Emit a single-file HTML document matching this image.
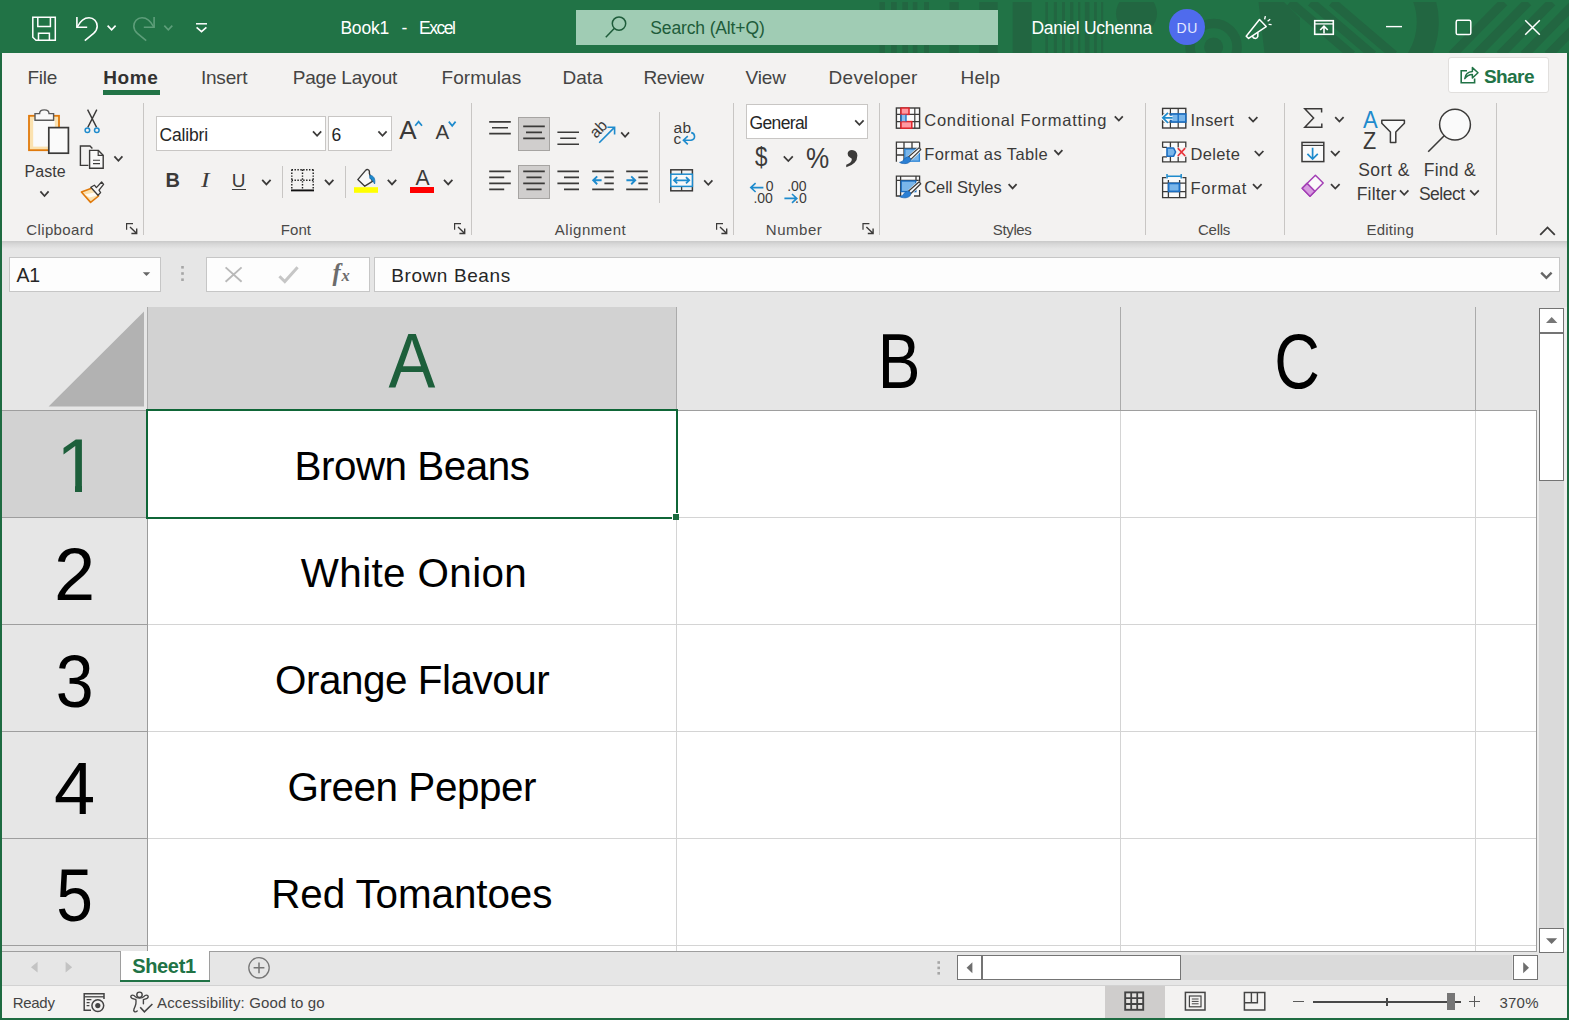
<!DOCTYPE html>
<html lang="en">
<head>
<meta charset="utf-8">
<title>Book1 - Excel</title>
<style>
*{box-sizing:border-box;margin:0;padding:0}
html,body{width:1569px;height:1020px;overflow:hidden;background:#217346;font-family:"Liberation Sans",sans-serif;color:#3b3a39}
#app{position:absolute;left:0;top:0;width:1569px;height:1020px;background:#217346;overflow:hidden}
.a{position:absolute}
.t{position:absolute;white-space:pre;line-height:1}
svg{position:absolute;overflow:visible}
</style>
</head>
<body>
<div id="app">
<!-- title bar -->
<div class="a" style="left:0px;top:0px;width:1569px;height:53px;background:#217346;"></div>
<svg style="left:860px;top:0px;overflow:hidden" width="709" height="53" viewBox="860 0 709 53"><rect x="860" y="0" width="709" height="2" fill="#217346"/><g><rect x="879.5" y="2" width="5.5" height="51" fill="#226641"/><rect x="891" y="2" width="5.7" height="51" fill="#226641"/><rect x="902.4" y="2" width="5.6" height="51" fill="#226641"/><rect x="912.8" y="2" width="4.6" height="51" fill="#226641"/><rect x="924" y="2" width="5.0" height="51" fill="#226641"/><rect x="949.5" y="2" width="9.2" height="51" fill="#226641"/><rect x="979.3" y="2" width="18.3" height="51" fill="#226641"/><rect x="1012.6" y="2" width="19.0" height="51" fill="#226641"/><rect x="1045.4" y="2" width="2.6" height="51" fill="#226641"/><rect x="1053.9" y="2" width="3.0" height="51" fill="#226641"/><rect x="1062" y="2" width="3.0" height="51" fill="#226641"/><rect x="1070" y="2" width="3.4" height="51" fill="#226641"/><rect x="1078" y="2" width="2.3" height="51" fill="#226641"/><rect x="1084.9" y="2" width="4.6" height="51" fill="#226641"/><rect x="1094" y="2" width="2.8" height="51" fill="#226641"/><rect x="1101" y="2" width="2.2" height="51" fill="#226641"/><circle cx="1136.5" cy="13.5" r="20.5" fill="#226641"/><circle cx="1213.6" cy="47" r="23.5" fill="none" stroke="#226641" stroke-width="9.5"/><circle cx="1213.6" cy="47" r="9.5" fill="#226641"/><path d="M1258.5 2H1284L1300 18V53H1264.5Z" fill="#226641"/><line x1="1290" y1="2" x2="1352" y2="55" stroke="#226641" stroke-width="9"/><line x1="1311" y1="2" x2="1373" y2="55" stroke="#226641" stroke-width="9"/><line x1="1332" y1="2" x2="1394" y2="55" stroke="#226641" stroke-width="9"/><path d="M1395 -37A69.5 69.5 0 0 1 1395 81" fill="none" stroke="#226641" stroke-width="22"/><line x1="1452" y1="55" x2="1504" y2="2" stroke="#226641" stroke-width="9"/><line x1="1476" y1="55" x2="1528" y2="2" stroke="#226641" stroke-width="9"/><line x1="1500" y1="55" x2="1552" y2="2" stroke="#226641" stroke-width="9"/><line x1="1524" y1="55" x2="1576" y2="2" stroke="#226641" stroke-width="9"/><line x1="1548" y1="55" x2="1600" y2="2" stroke="#226641" stroke-width="9"/></g><rect x="860" y="0" width="709" height="2" fill="#217346"/></svg>
<svg style="left:30px;top:14px" width="30" height="30" viewBox="30 14 30 30" ><path d="M32.8 17.3H55.3V40.3H36L32.8 37.2Z M37.8 17.3V26.5H50.4V17.3 M38.5 40.3V33.2H49.4V40.3" fill="none" stroke="#fff" stroke-width="1.5" stroke-linejoin="miter"/></svg>
<svg style="left:74px;top:14px" width="46" height="30" viewBox="74 14 46 30" ><path d="M76.9 17V27.2H87.2" fill="none" stroke="#fff" stroke-width="1.6"/><path d="M77.2 27C80 21.5 84.2 17.7 89 17.7C93.8 17.7 97.2 21.6 97.2 26.2C97.2 29.3 95.8 31.4 93.6 33.4L84.8 40.6" fill="none" stroke="#fff" stroke-width="1.6"/><polyline points="107.6,25.6 111.6,29.8 115.6,25.6" fill="none" stroke="#fff" stroke-width="1.6"/></svg>
<svg style="left:130px;top:14px" width="46" height="30" viewBox="130 14 46 30" ><path d="M154.1 17V27.2H143.8" fill="none" stroke="#5e9e7a" stroke-width="1.6"/><path d="M153.8 27C151 21.5 146.8 17.7 142 17.7C137.2 17.7 133.8 21.6 133.8 26.2C133.8 29.3 135.2 31.4 137.4 33.4L146.2 40.6" fill="none" stroke="#5e9e7a" stroke-width="1.6"/><polyline points="164.3,25.6 168.3,29.8 172.3,25.6" fill="none" stroke="#5e9e7a" stroke-width="1.6"/></svg>
<svg style="left:194px;top:20px" width="16" height="14" viewBox="194 20 16 14" ><line x1="196" y1="23.8" x2="207" y2="23.8" stroke="#fff" stroke-width="1.5"/><polyline points="196.6,27.4 201.5,31.6 206.4,27.4" fill="none" stroke="#fff" stroke-width="1.6"/></svg>
<div class="t" style="left:340.40px;top:20.00px;font-size:17.5px;letter-spacing:-0.204px;color:#fff;">Book1</div>
<div class="t" style="left:401.40px;top:20.00px;font-size:17.5px;color:#fff;">-</div>
<div class="t" style="left:419.00px;top:20.00px;font-size:17.5px;letter-spacing:-1.479px;color:#fff;">Excel</div>
<div class="a" style="left:576px;top:10px;width:422px;height:35px;background:#a0ccb4;"></div>
<svg style="left:604px;top:15px" width="24" height="24" viewBox="604 15 24 24" ><circle cx="619" cy="23.6" r="6.7" fill="none" stroke="#1e5c3a" stroke-width="1.5"/><line x1="614.2" y1="28.6" x2="605.8" y2="37.2" stroke="#1e5c3a" stroke-width="1.5"/></svg>
<div class="t" style="left:650.30px;top:20.00px;font-size:17.5px;letter-spacing:-0.137px;color:#1e5c3a;">Search (Alt+Q)</div>
<div class="t" style="left:1031.50px;top:20.00px;font-size:17.5px;letter-spacing:-0.288px;color:#fff;">Daniel Uchenna</div>
<div class="a" style="left:1169px;top:9px;width:36px;height:36px;border-radius:50%;background:#4f6bed"></div>
<div class="t" style="left:1176.60px;top:21.00px;font-size:14px;letter-spacing:0.439px;color:#e4e8ff;">DU</div>
<svg style="left:1243px;top:14px" width="30" height="28" viewBox="1243 14 30 28" ><path d="M1246.2 36.2L1259.5 19.5L1266.2 26.6L1248.6 38.4Z" fill="none" stroke="#fff" stroke-width="1.5" stroke-linejoin="round"/><path d="M1252.6 35.8C1252.6 38.6 1256.6 39.6 1257.8 36.4L1257.9 32.6" fill="none" stroke="#fff" stroke-width="1.5"/><path d="M1264.6 19.4L1265.4 16.2M1267.6 21.2L1270.2 19.2M1268.6 24.4L1271.6 24.6" stroke="#fff" stroke-width="1.4" fill="none"/></svg>
<svg style="left:1312px;top:18px" width="24" height="19" viewBox="1312 18 24 19" ><rect x="1314.7" y="20.7" width="18.6" height="13.6" fill="none" stroke="#fff" stroke-width="1.6"/><line x1="1314.7" y1="23.9" x2="1333.3" y2="23.9" stroke="#fff" stroke-width="1.3"/><path d="M1324 33.6V26.6M1320.2 30L1324 26.2L1327.8 30" fill="none" stroke="#fff" stroke-width="1.6"/></svg>
<svg style="left:1384px;top:18px" width="20" height="18" viewBox="1384 18 20 18" ><line x1="1386" y1="26.6" x2="1402" y2="26.6" stroke="#fff" stroke-width="1.4"/></svg>
<svg style="left:1454px;top:18px" width="20" height="19" viewBox="1454 18 20 19" ><rect x="1456.2" y="20.3" width="14.6" height="14.2" rx="1.6" fill="none" stroke="#fff" stroke-width="1.5"/></svg>
<svg style="left:1523px;top:18px" width="20" height="19" viewBox="1523 18 20 19" ><path d="M1525.2 20.2L1539.8 34.8M1539.8 20.2L1525.2 34.8" stroke="#fff" stroke-width="1.5" fill="none"/></svg>
<div class="a" style="left:2px;top:53px;width:1565px;height:188px;background:#f3f2f1;"></div>
<!-- tabs -->
<div class="t" style="left:27.50px;top:68.00px;font-size:19px;letter-spacing:-0.304px;color:#444443;">File</div>
<div class="t" style="left:103.20px;top:68.00px;font-size:19px;letter-spacing:0.653px;font-weight:bold;color:#323130;">Home</div>
<div class="a" style="left:103px;top:90px;width:57px;height:5px;background:#217346;"></div>
<div class="t" style="left:200.90px;top:68.00px;font-size:19px;letter-spacing:-0.187px;color:#444443;">Insert</div>
<div class="t" style="left:292.70px;top:68.00px;font-size:19px;letter-spacing:-0.200px;color:#444443;">Page Layout</div>
<div class="t" style="left:441.60px;top:68.00px;font-size:19px;letter-spacing:0.052px;color:#444443;">Formulas</div>
<div class="t" style="left:562.50px;top:68.00px;font-size:19px;letter-spacing:0.041px;color:#444443;">Data</div>
<div class="t" style="left:643.50px;top:68.00px;font-size:19px;letter-spacing:-0.350px;color:#444443;">Review</div>
<div class="t" style="left:745.50px;top:68.00px;font-size:19px;letter-spacing:-0.135px;color:#444443;">View</div>
<div class="t" style="left:828.60px;top:68.00px;font-size:19px;letter-spacing:0.277px;color:#444443;">Developer</div>
<div class="t" style="left:960.50px;top:68.00px;font-size:19px;letter-spacing:0.156px;color:#444443;">Help</div>
<div class="a" style="left:1448px;top:57px;width:101px;height:36px;background:#fff;border:1px solid #e1dfdd;border-radius:3px"></div>
<svg style="left:1457px;top:64px" width="23" height="22" viewBox="1457 64 23 22" ><path d="M1467 70.8H1461.2V82.8H1474.6V78.4" fill="none" stroke="#217346" stroke-width="1.6"/><path d="M1464.8 78.6C1465.4 74 1468.4 71.6 1472.4 71.4V67.6L1478 72.8L1472.4 78V74.4C1469.2 74.4 1466.8 75.6 1464.8 78.6Z" fill="none" stroke="#217346" stroke-width="1.5" stroke-linejoin="round"/></svg>
<div class="t" style="left:1484.00px;top:67.00px;font-size:19px;letter-spacing:-0.582px;font-weight:bold;color:#217346;">Share</div>
<!-- ribbon -->
<div class="a" style="left:143px;top:103px;width:1px;height:132px;background:#c8c6c4;"></div>
<div class="a" style="left:471px;top:103px;width:1px;height:132px;background:#c8c6c4;"></div>
<div class="a" style="left:733px;top:103px;width:1px;height:132px;background:#c8c6c4;"></div>
<div class="a" style="left:879px;top:103px;width:1px;height:132px;background:#c8c6c4;"></div>
<div class="a" style="left:1145px;top:103px;width:1px;height:132px;background:#c8c6c4;"></div>
<div class="a" style="left:1284px;top:103px;width:1px;height:132px;background:#c8c6c4;"></div>
<div class="a" style="left:1496px;top:103px;width:1px;height:132px;background:#c8c6c4;"></div>
<svg style="left:26px;top:107px" width="46" height="49" viewBox="26 107 46 49" ><rect x="29" y="115.8" width="30" height="34.4" fill="#fbe2b0" stroke="#e07a0c" stroke-width="1.8"/><rect x="33.2" y="119.6" width="21.6" height="27" fill="#fafafa"/><path d="M35 120.2V113.6H39.6C39.6 108.6 49 108.6 49 113.6H53.6V120.2Z" fill="#f8f8f8" stroke="#5a5a5a" stroke-width="1.4"/><rect x="48.8" y="127.6" width="19.6" height="25.6" fill="#fafafa" stroke="#3b3a39" stroke-width="1.7"/></svg>
<div class="t" style="left:24.60px;top:164.00px;font-size:16px;letter-spacing:0.017px;color:#3b3a39;">Paste</div>
<svg style="left:38px;top:189px" width="14" height="10" viewBox="38 189 14 10" ><polyline points="40.4,191.4 44.5,196 48.6,191.4" fill="none" stroke="#3b3a39" stroke-width="1.75"/></svg>
<svg style="left:82px;top:107px" width="20" height="29" viewBox="82 107 20 29" ><path d="M87.6 109.6L96.6 127.4M96.8 109.6L87.8 127.4" stroke="#3b3a39" stroke-width="1.4" fill="none"/><circle cx="87.4" cy="130.2" r="2.3" fill="none" stroke="#1e8bcd" stroke-width="1.5"/><circle cx="96.8" cy="130.2" r="2.3" fill="none" stroke="#1e8bcd" stroke-width="1.5"/></svg>
<svg style="left:78px;top:143px" width="48" height="28" viewBox="78 143 48 28" ><path d="M88.4 165.4H80.4V146H90L92.4 148.4" fill="none" stroke="#3b3a39" stroke-width="1.4"/><path d="M89.6 150.4H98.4L103.2 155.2V168.2H89.6Z" fill="#f8f8f8" stroke="#3b3a39" stroke-width="1.4"/><path d="M98.2 150.6V155.4H103" fill="none" stroke="#3b3a39" stroke-width="1.2"/><path d="M93 160.2H100M93 163.6H100" stroke="#3b3a39" stroke-width="1.1"/><polyline points="114.4,156.4 118.4,160.8 122.4,156.4" fill="none" stroke="#3b3a39" stroke-width="1.75"/></svg>
<svg style="left:78px;top:179px" width="28" height="26" viewBox="78 179 28 26" ><path d="M81.4 192L93.6 187.4L98.6 196L90.6 202.4Z" fill="#fbe2b0" stroke="#e07a0c" stroke-width="1.6" stroke-linejoin="round"/><path d="M84.5 194.6L95.8 192.2L97 195.6L89.5 197.6Z" fill="#fff" opacity=".85"/><path d="M90.8 187.2L94.4 185.2L96.4 187.6L101.6 182L103.6 184.4L99 190.2L100.6 192.6L98 195.2Z" fill="#f8f8f8" stroke="#3b3a39" stroke-width="1.3" stroke-linejoin="round"/></svg>
<div class="t" style="left:26.30px;top:222.00px;font-size:15px;letter-spacing:0.366px;color:#4a4948;">Clipboard</div>
<svg style="left:125px;top:222px" width="15" height="15" viewBox="125 222 15 15" ><path d="M126.6 229.8V223.6H133.0" fill="none" stroke="#3b3a39" stroke-width="1.2"/><path d="M130.0 227.0L136.5 233.3M136.7 228.4V233.5H131.4" fill="none" stroke="#3b3a39" stroke-width="1.4"/></svg>
<div class="a" style="left:156px;top:116px;width:170px;height:35px;background:#fff;border:1px solid #c8c6c4;"></div>
<div class="a" style="left:328px;top:116px;width:64px;height:35px;background:#fff;border:1px solid #c8c6c4;"></div>
<div class="t" style="left:159.60px;top:127.00px;font-size:17.5px;letter-spacing:-0.185px;color:#262626;">Calibri</div>
<div class="t" style="left:331.40px;top:127.00px;font-size:17.5px;color:#262626;">6</div>
<svg style="left:310px;top:128px" width="14" height="12" viewBox="310 128 14 12" ><polyline points="313,131.4 317.1,135.8 321.2,131.4" fill="none" stroke="#3b3a39" stroke-width="1.75"/></svg>
<svg style="left:374px;top:128px" width="16" height="12" viewBox="374 128 16 12" ><polyline points="378.4,131.4 382.5,135.8 386.6,131.4" fill="none" stroke="#3b3a39" stroke-width="1.75"/></svg>
<div class="t" style="left:399.20px;top:117.00px;font-size:26px;color:#3b3a39;">A</div>
<svg style="left:413px;top:119px" width="11" height="9" viewBox="413 119 11 9" ><polyline points="415.2,125.8 418.6,121.6 422,125.8" fill="none" stroke="#1e8bcd" stroke-width="1.7"/></svg>
<div class="t" style="left:435.60px;top:122.00px;font-size:20.5px;color:#3b3a39;">A</div>
<svg style="left:447px;top:119px" width="11" height="9" viewBox="447 119 11 9" ><polyline points="448.8,121.6 452.20000000000005,125.8 455.6,121.6" fill="none" stroke="#1e8bcd" stroke-width="1.7"/></svg>
<div class="t" style="left:165.60px;top:170.00px;font-size:20px;font-weight:bold;color:#3b3a39;">B</div>
<div class="t" style="left:201.40px;top:170.00px;font-size:20.5px;font-style:italic;font-family:'Liberation Serif',serif;color:#3b3a39;transform:scaleX(1.25);transform-origin:left;">I</div>
<div class="t" style="left:231.80px;top:171.00px;font-size:19px;color:#3b3a39;">U</div>
<div class="a" style="left:232px;top:189px;width:14px;height:1.4000000000000057px;background:#3b3a39;"></div>
<svg style="left:260px;top:177px" width="13" height="10" viewBox="260 177 13 10" ><polyline points="262.2,179.8 266.4,184.4 270.6,179.8" fill="none" stroke="#3b3a39" stroke-width="1.75"/></svg>
<div class="a" style="left:282px;top:166px;width:1px;height:32px;background:#c8c6c4;"></div>
<svg style="left:290px;top:167px" width="26" height="26" viewBox="290 167 26 26" ><g stroke="#1c1c1c" stroke-width="1.4" stroke-dasharray="1.4 1.5" fill="none"><path d="M291.6 169.8H313.6M291.8 169.6V189M313.2 169.6V189M291.6 180.2H313.6M302.5 169.6V189"/></g><line x1="291" y1="190.4" x2="314" y2="190.4" stroke="#111" stroke-width="1.9"/></svg>
<svg style="left:323px;top:177px" width="13" height="10" viewBox="323 177 13 10" ><polyline points="325,179.8 329.2,184.4 333.4,179.8" fill="none" stroke="#3b3a39" stroke-width="1.75"/></svg>
<div class="a" style="left:345px;top:166px;width:1px;height:32px;background:#c8c6c4;"></div>
<svg style="left:352px;top:167px" width="28" height="27" viewBox="352 167 28 27" ><path d="M357.8 179.6L365.6 170.4C366.8 168.8 369.4 169.4 369.4 171.6V173.6L372.4 181.4L364.8 186.2Z" fill="#f8f8f8" stroke="#3b3a39" stroke-width="1.4" stroke-linejoin="round"/><path d="M369.8 175.2C373.6 175.6 375.6 178.6 374.6 184C373.2 181 372 179.2 369.8 178.4Z" fill="#1e8bcd" stroke="#1c6fae" stroke-width=".8"/><rect x="354" y="187.2" width="24" height="5.6" fill="#ffff00"/></svg>
<svg style="left:386px;top:177px" width="13" height="10" viewBox="386 177 13 10" ><polyline points="387.8,179.8 392.0,184.4 396.2,179.8" fill="none" stroke="#3b3a39" stroke-width="1.75"/></svg>
<div class="t" style="left:414.90px;top:167.00px;font-size:22.5px;color:#3b3a39;transform:scaleX(.94);">A</div>
<div class="a" style="left:410px;top:187.2px;width:24px;height:5.600000000000023px;background:#ff0000;"></div>
<svg style="left:442px;top:177px" width="13" height="10" viewBox="442 177 13 10" ><polyline points="444,179.8 448.2,184.4 452.4,179.8" fill="none" stroke="#3b3a39" stroke-width="1.75"/></svg>
<div class="t" style="left:280.80px;top:222.00px;font-size:15px;letter-spacing:0.046px;color:#4a4948;">Font</div>
<svg style="left:453px;top:222px" width="15" height="15" viewBox="453 222 15 15" ><path d="M454.6 229.8V223.6H461.0" fill="none" stroke="#3b3a39" stroke-width="1.2"/><path d="M458.0 227.0L464.5 233.3M464.7 228.4V233.5H459.4" fill="none" stroke="#3b3a39" stroke-width="1.4"/></svg>
<div class="a" style="left:518px;top:117px;width:32px;height:34px;background:#d0cecd;border:1px solid #a6a4a2;"></div>
<div class="a" style="left:518px;top:165px;width:32px;height:34px;background:#d0cecd;border:1px solid #a6a4a2;"></div>
<svg style="left:488px;top:118px" width="92" height="29" viewBox="488 118 92 29" ><path d="M489.2 121.8H510.8M492.0 127.7H508.0M489.2 133.6H510.8" stroke="#3b3a39" stroke-width="1.65" fill="none"/><path d="M523.2 126.4H544.8000000000001M526.0 132.4H542.0M523.2 138.4H544.8000000000001" stroke="#3b3a39" stroke-width="1.65" fill="none"/><path d="M557.4 132.2H579.0M560.1999999999999 138.2H576.1999999999999M557.4 144.2H579.0" stroke="#3b3a39" stroke-width="1.65" fill="none"/></svg>
<svg style="left:488px;top:168px" width="162" height="24" viewBox="488 168 162 24" ><path d="M489.2 171.4H510.8M489.2 177.4H504.2M489.2 183.3H510.8M489.2 189.3H504.2" stroke="#3b3a39" stroke-width="1.65" fill="none"/><path d="M523.2 171.4H544.8000000000001M526.4000000000001 177.4H541.6M523.2 183.3H544.8000000000001M526.4000000000001 189.3H541.6" stroke="#3b3a39" stroke-width="1.65" fill="none"/><path d="M557.4 171.4H579.0M564.0 177.4H579.0M557.4 183.3H579.0M564.0 189.3H579.0" stroke="#3b3a39" stroke-width="1.65" fill="none"/><path d="M592.2 171.4H613.8000000000001M604.4000000000001 177.4H613.8000000000001M604.4000000000001 183.3H613.8000000000001M592.2 189.3H613.8000000000001" stroke="#3b3a39" stroke-width="1.65" fill="none"/><path d="M601.6 180.3H593.6M597.2 176.4L593.2 180.3L597.2 184.2" fill="none" stroke="#1e8bcd" stroke-width="1.9"/><path d="M626.2 171.4H647.8000000000001M638.4000000000001 177.4H647.8000000000001M638.4000000000001 183.3H647.8000000000001M626.2 189.3H647.8000000000001" stroke="#3b3a39" stroke-width="1.65" fill="none"/><path d="M626.4 180.3H634.8M631.2 176.4L635.2 180.3L631.2 184.2" fill="none" stroke="#1e8bcd" stroke-width="1.9"/></svg>
<div class="t" style="left:598px;top:125px;font-size:16px;color:#3b3a39;transform:rotate(-45deg);transform-origin:0 100%;letter-spacing:-.3px">ab</div>
<svg style="left:596px;top:124px" width="36" height="22" viewBox="596 124 36 22" ><path d="M599.2 142.8L614.2 127.6M607.4 127.2H614.6V134.4" fill="none" stroke="#1e8bcd" stroke-width="1.6"/><polyline points="621.2,132.4 625.1,136.8 629,132.4" fill="none" stroke="#3b3a39" stroke-width="1.75"/></svg>
<div class="a" style="left:659px;top:112px;width:1px;height:91px;background:#c8c6c4;"></div>
<div class="t" style="left:673.40px;top:120.00px;font-size:15.5px;letter-spacing:0.379px;color:#3b3a39;">ab</div>
<div class="t" style="left:673.40px;top:131.00px;font-size:15.5px;color:#3b3a39;">c</div>
<svg style="left:682px;top:132px" width="14" height="14" viewBox="682 132 14 14" ><path d="M691.2 132.6C695.6 133.4 695.8 139.6 691 140.2H683.6M687.8 136.2L683.4 140.2L687.8 144.4" fill="none" stroke="#1e8bcd" stroke-width="1.6"/></svg>
<svg style="left:669px;top:168px" width="45" height="25" viewBox="669 168 45 25" ><rect x="670.8" y="169.8" width="21.6" height="21" fill="none" stroke="#3b3a39" stroke-width="1.5"/><path d="M681.6 169.8V174M681.6 186.6V190.8" stroke="#3b3a39" stroke-width="1.3"/><rect x="670.8" y="174.2" width="21.6" height="12.2" fill="#f8f8f8" stroke="#1e8bcd" stroke-width="1.5"/><path d="M674.4 180.3H688.8M677.2 177.2L674 180.3L677.2 183.4M686 177.2L689.2 180.3L686 183.4" fill="none" stroke="#1e8bcd" stroke-width="1.8"/><polyline points="704.2,180.4 708.3,184.8 712.4,180.4" fill="none" stroke="#3b3a39" stroke-width="1.75"/></svg>
<div class="t" style="left:554.80px;top:222.00px;font-size:15px;letter-spacing:0.522px;color:#4a4948;">Alignment</div>
<svg style="left:715px;top:222px" width="15" height="15" viewBox="715 222 15 15" ><path d="M716.6 229.8V223.6H723.0" fill="none" stroke="#3b3a39" stroke-width="1.2"/><path d="M720.0 227.0L726.5 233.3M726.7 228.4V233.5H721.4" fill="none" stroke="#3b3a39" stroke-width="1.4"/></svg>
<div class="a" style="left:746px;top:104px;width:122px;height:35px;background:#fff;border:1px solid #c8c6c4;"></div>
<div class="t" style="left:749.40px;top:115.00px;font-size:17.5px;letter-spacing:-0.609px;color:#262626;">General</div>
<svg style="left:853px;top:118px" width="13" height="10" viewBox="853 118 13 10" ><polyline points="855.2,120.4 859.4000000000001,124.8 863.6,120.4" fill="none" stroke="#3b3a39" stroke-width="1.75"/></svg>
<div class="t" style="left:754.60px;top:143.00px;font-size:28px;color:#3b3a39;transform:scaleX(.8);transform-origin:left;">$</div>
<svg style="left:782px;top:154px" width="13" height="10" viewBox="782 154 13 10" ><polyline points="783.8,156.4 788.3,161 792.8,156.4" fill="none" stroke="#3b3a39" stroke-width="1.75"/></svg>
<div class="t" style="left:805.60px;top:144.00px;font-size:29px;color:#3b3a39;transform:scaleX(.9);transform-origin:left;">%</div>
<div class="t" style="left:845.60px;top:111.00px;font-size:56px;font-weight:bold;font-family:'Liberation Serif',serif;color:#3b3a39;">,</div>
<div class="t" style="left:765.80px;top:179.00px;font-size:14px;color:#3b3a39;">0</div>
<div class="t" style="left:753.40px;top:191.00px;font-size:14px;color:#3b3a39;">.00</div>
<svg style="left:749px;top:181px" width="17" height="13" viewBox="749 181 17 13" ><path d="M763.4 187.6H751M755.6 183.2L750.8 187.6L755.6 192" fill="none" stroke="#1e8bcd" stroke-width="1.6"/></svg>
<div class="t" style="left:787.20px;top:179.00px;font-size:14px;color:#3b3a39;">.00</div>
<div class="t" style="left:795.00px;top:191.00px;font-size:14px;color:#3b3a39;">.0</div>
<svg style="left:783px;top:192px" width="17" height="13" viewBox="783 192 17 13" ><path d="M784.4 198.4H796.6M792 194L796.8 198.4L792 202.8" fill="none" stroke="#1e8bcd" stroke-width="1.6"/></svg>
<div class="t" style="left:765.80px;top:222.00px;font-size:15px;letter-spacing:0.541px;color:#4a4948;">Number</div>
<svg style="left:861px;top:222px" width="15" height="15" viewBox="861 222 15 15" ><path d="M863.0 229.8V223.6H869.4" fill="none" stroke="#3b3a39" stroke-width="1.2"/><path d="M866.4 227.0L872.9 233.3M873.1 228.4V233.5H867.8" fill="none" stroke="#3b3a39" stroke-width="1.4"/></svg>
<svg style="left:895px;top:106px" width="27" height="24" viewBox="895 106 27 24" ><rect x="896.4" y="108" width="23.2" height="20.2" fill="#fafafa" stroke="#3b3a39" stroke-width="1.4"/><path d="M900.8 108V128.2M914.8 108V128.2M896.4 114.4H919.6M896.4 121.6H919.6" stroke="#3b3a39" stroke-width="1.2" fill="none"/><rect x="901" y="108" width="8" height="6.4" fill="#ff9aa2" stroke="#e0262c" stroke-width="1.5"/><rect x="901" y="121.6" width="10.8" height="6.6" fill="#ff9aa2" stroke="#e0262c" stroke-width="1.5"/><rect x="901.2" y="114.8" width="4.8" height="6.4" fill="#8cc0ee"/><path d="M901.2 114.6V121.4M906 114.6V121.4" stroke="#1b6ec2" stroke-width="1.3"/></svg>
<div class="t" style="left:924.20px;top:112.00px;font-size:16.5px;letter-spacing:0.773px;color:#3b3a39;">Conditional Formatting</div>
<svg style="left:1113px;top:114px" width="12" height="9" viewBox="1113 114 12 9" ><polyline points="1114.8,116.4 1118.8,120.6 1122.8,116.4" fill="none" stroke="#3b3a39" stroke-width="1.75"/></svg>
<svg style="left:895px;top:140px" width="27" height="26" viewBox="895 140 27 26" ><rect x="896.4" y="142.2" width="23.2" height="19.4" fill="#fafafa"/><path d="M896.4 142.2H919.6M896.4 141.5V161.8M904 142.2V161.6M912 142.2V148.4M919.6 142.2V148.4M896.4 148.4H919.6M896.4 155H904" stroke="#3b3a39" stroke-width="1.3" fill="none"/><rect x="904.8" y="149.2" width="14.6" height="12" fill="#7ab6ea" stroke="#2f86d6" stroke-width="1.3"/><path d="M920.4 148.4L908.8 159.0" stroke="#f3f2f1" stroke-width="5.4" fill="none"/><path d="M919.2 147.6L908.4 157.0L910.6 159.6L920.8 149.6Z" fill="#fafafa" stroke="#3b3a39" stroke-width="1.2" stroke-linejoin="round"/><path d="M899.6 162.4C903.8 162.2 903.6 157.6 907.6 156.8C910.8 157.0 911.6 159.8 909.8 161.8C907.2 164.2 902.8 164.0 899.6 162.4Z" fill="#2a7fd4" stroke="#1b66b4" stroke-width=".8"/></svg>
<div class="t" style="left:924.20px;top:146.00px;font-size:16.5px;letter-spacing:0.400px;color:#3b3a39;">Format as Table</div>
<svg style="left:1053px;top:148px" width="12" height="9" viewBox="1053 148 12 9" ><polyline points="1054.4,150.2 1058.4,154.4 1062.4,150.2" fill="none" stroke="#3b3a39" stroke-width="1.75"/></svg>
<svg style="left:895px;top:174px" width="27" height="26" viewBox="895 174 27 26" ><rect x="896.4" y="176.2" width="23.2" height="19.8" fill="#fafafa"/><path d="M896.4 176.2H919.6V183M896.4 175.5V196H901M914 196H919.6V190M896.4 180.4H919.6M900.6 176.2V196M916 176.2V180.4" stroke="#3b3a39" stroke-width="1.3" fill="none"/><rect x="901.2" y="181" width="14.6" height="10.6" fill="#7ab6ea" stroke="#1b6ec2" stroke-width="1.4"/><path d="M920.4 182.6L908.8 193.2" stroke="#f3f2f1" stroke-width="5.4" fill="none"/><path d="M919.2 181.8L908.4 191.2L910.6 193.8L920.8 183.8Z" fill="#fafafa" stroke="#3b3a39" stroke-width="1.2" stroke-linejoin="round"/><path d="M899.6 196.6C903.8 196.4 903.6 191.8 907.6 191.0C910.8 191.2 911.6 194.0 909.8 196.0C907.2 198.4 902.8 198.2 899.6 196.6Z" fill="#2a7fd4" stroke="#1b66b4" stroke-width=".8"/></svg>
<div class="t" style="left:924.20px;top:179.00px;font-size:16.5px;letter-spacing:-0.049px;color:#3b3a39;">Cell Styles</div>
<svg style="left:1007px;top:182px" width="12" height="9" viewBox="1007 182 12 9" ><polyline points="1008.6,184.2 1012.6,188.4 1016.6,184.2" fill="none" stroke="#3b3a39" stroke-width="1.75"/></svg>
<div class="t" style="left:992.80px;top:222.00px;font-size:15px;letter-spacing:-0.358px;color:#4a4948;">Styles</div>
<svg style="left:1160px;top:106px" width="28" height="24" viewBox="1160 106 28 24" ><rect x="1162.6" y="108.4" width="23.2" height="19.6" fill="#fafafa" stroke="#3b3a39" stroke-width="1.4"/><path d="M1170.4 108.4V128M1178.2 108.4V128M1162.6 114H1185.8M1162.6 122H1185.8" stroke="#3b3a39" stroke-width="1.2" fill="none"/><rect x="1171" y="114" width="14.8" height="8" fill="#7ab6ea" stroke="#1b6ec2" stroke-width="1.6"/><line x1="1178.2" y1="114" x2="1178.2" y2="122" stroke="#1b6ec2" stroke-width="1.4"/><path d="M1172.6 117.8H1163.4M1168 112.8L1162.8 117.8L1168 122.8" fill="none" stroke="#fafafa" stroke-width="4"/><path d="M1172.6 117.8H1163.4M1168 112.8L1162.8 117.8L1168 122.8" fill="none" stroke="#1e8bcd" stroke-width="1.7"/></svg>
<div class="t" style="left:1190.60px;top:112.00px;font-size:16.5px;letter-spacing:0.389px;color:#3b3a39;">Insert</div>
<svg style="left:1247px;top:115px" width="13" height="9" viewBox="1247 115 13 9" ><polyline points="1248.8,117.2 1253.1,121.6 1257.4,117.2" fill="none" stroke="#3b3a39" stroke-width="1.75"/></svg>
<svg style="left:1160px;top:140px" width="28" height="24" viewBox="1160 140 28 24" ><rect x="1162.6" y="142.2" width="23.2" height="19.6" fill="#fafafa"/><path d="M1162.6 147.4V142.2H1185.8V147.4M1162.6 156.8V161.8H1185.8V156.8M1170.4 142.2V147.4M1178.2 142.2V147.4M1170.4 156.8V161.8M1178.2 156.8V161.8M1162.6 147.4H1167M1162.6 156.8H1167" stroke="#3b3a39" stroke-width="1.3" fill="none"/><circle cx="1181.4" cy="152" r="5.2" fill="#f3f2f1"/><path d="M1167 148H1173.6L1175.6 152L1173.6 156.2H1167Z" fill="#7ab6ea" stroke="#1b6ec2" stroke-width="1.6" stroke-linejoin="round"/><path d="M1177.8 148.2L1185.2 156M1185.2 148.2L1177.8 156" stroke="#e8333a" stroke-width="1.7" fill="none"/></svg>
<div class="t" style="left:1190.60px;top:146.00px;font-size:16.5px;letter-spacing:0.317px;color:#3b3a39;">Delete</div>
<svg style="left:1253px;top:149px" width="13" height="9" viewBox="1253 149 13 9" ><polyline points="1254.8,151 1259.1,155.4 1263.4,151" fill="none" stroke="#3b3a39" stroke-width="1.75"/></svg>
<svg style="left:1160px;top:172px" width="28" height="27" viewBox="1160 172 28 27" ><rect x="1162.6" y="177.6" width="23.2" height="20" fill="#fafafa"/><path d="M1166 177.6H1162.6V197.6H1185.8V177.6H1182.4M1168.4 180V197.6M1179.6 180V197.6M1162.6 183.2H1185.8M1162.6 191.6H1185.8" stroke="#3b3a39" stroke-width="1.3" fill="none"/><rect x="1168.6" y="183.4" width="10.8" height="8" fill="#7ab6ea" stroke="#1b6ec2" stroke-width="1.7"/><path d="M1167 176.2H1181.2M1167 174V178.6M1181.2 174V178.6" stroke="#1e8bcd" stroke-width="1.5" fill="none"/></svg>
<div class="t" style="left:1190.60px;top:180.00px;font-size:16.5px;letter-spacing:0.690px;color:#3b3a39;">Format</div>
<svg style="left:1251px;top:182px" width="13" height="9" viewBox="1251 182 13 9" ><polyline points="1253,184.2 1257.3,188.6 1261.6,184.2" fill="none" stroke="#3b3a39" stroke-width="1.75"/></svg>
<div class="t" style="left:1198.00px;top:222.00px;font-size:15px;letter-spacing:-0.268px;color:#4a4948;">Cells</div>
<svg style="left:1302px;top:106px" width="44" height="24" viewBox="1302 106 44 24" ><path d="M1321.6 112.4V108.8H1304.8L1313.6 118L1304.8 127.2H1321.8V123.4" fill="none" stroke="#3b3a39" stroke-width="1.5"/><polyline points="1335.2,117.2 1339.4,121.6 1343.6,117.2" fill="none" stroke="#3b3a39" stroke-width="1.75"/></svg>
<svg style="left:1300px;top:140px" width="42" height="24" viewBox="1300 140 42 24" ><rect x="1302" y="142.4" width="21.8" height="19.2" fill="#fafafa" stroke="#3b3a39" stroke-width="1.5"/><line x1="1302" y1="145.4" x2="1323.8" y2="145.4" stroke="#3b3a39" stroke-width="1.2"/><path d="M1312.6 147.8V158.6M1307.4 153.8L1312.6 159L1317.8 153.8" fill="none" stroke="#1e8bcd" stroke-width="1.7"/><polyline points="1331,151 1335.3,155.4 1339.6,151" fill="none" stroke="#3b3a39" stroke-width="1.75"/></svg>
<svg style="left:1300px;top:173px" width="42" height="26" viewBox="1300 173 42 26" ><path d="M1302.2 188.2L1315.4 175.2L1323.2 183L1310 196.2Z" fill="#fafafa" stroke="#a33fb5" stroke-width="1.5" stroke-linejoin="round"/><path d="M1302.2 188.2L1307.1 183.4L1314.9 191.3L1310 196.2Z" fill="#d79ae0" stroke="#a33fb5" stroke-width="1.5" stroke-linejoin="round"/><polyline points="1331,184.2 1335.3,188.6 1339.6,184.2" fill="none" stroke="#3b3a39" stroke-width="1.75"/></svg>
<div class="t" style="left:1362.60px;top:108.00px;font-size:24px;color:#1e8bcd;transform:scaleX(.92);transform-origin:left;">A</div>
<div class="t" style="left:1363.40px;top:129.00px;font-size:24px;color:#3b3a39;transform:scaleX(.9);transform-origin:left;">Z</div>
<svg style="left:1380px;top:118px" width="26" height="27" viewBox="1380 118 26 27" ><path d="M1381.8 120.2H1404.4V123.2L1395.8 132V142.4H1390.4V132L1381.8 123.2Z" fill="#fafafa" stroke="#3b3a39" stroke-width="1.5" stroke-linejoin="round"/></svg>
<div class="t" style="left:1358.20px;top:162.00px;font-size:17.5px;letter-spacing:0.512px;color:#3b3a39;">Sort &amp;</div>
<div class="t" style="left:1356.80px;top:186.00px;font-size:17.5px;letter-spacing:0.135px;color:#3b3a39;">Filter</div>
<svg style="left:1398px;top:188px" width="13" height="9" viewBox="1398 188 13 9" ><polyline points="1400,190.4 1404.2,194.8 1408.4,190.4" fill="none" stroke="#3b3a39" stroke-width="1.75"/></svg>
<svg style="left:1426px;top:107px" width="47" height="47" viewBox="1426 107 47 47" ><circle cx="1455" cy="124.6" r="15.4" fill="#fafafa" stroke="#3b3a39" stroke-width="1.5"/><line x1="1444.2" y1="135.8" x2="1428.2" y2="151.8" stroke="#3b3a39" stroke-width="1.6"/></svg>
<div class="t" style="left:1423.80px;top:162.00px;font-size:17.5px;letter-spacing:0.237px;color:#3b3a39;">Find &amp;</div>
<div class="t" style="left:1418.90px;top:186.00px;font-size:17.5px;letter-spacing:-0.490px;color:#3b3a39;">Select</div>
<svg style="left:1468px;top:188px" width="13" height="9" viewBox="1468 188 13 9" ><polyline points="1470.2,190.4 1474.5,194.8 1478.8,190.4" fill="none" stroke="#3b3a39" stroke-width="1.75"/></svg>
<div class="t" style="left:1366.40px;top:222.00px;font-size:15px;letter-spacing:0.248px;color:#4a4948;">Editing</div>
<svg style="left:1538px;top:225px" width="19" height="12" viewBox="1538 225 19 12" ><polyline points="1540.2,234.8 1547.5,227.4 1554.8,234.8" fill="none" stroke="#3b3a39" stroke-width="1.75"/></svg>
<div class="a" style="left:2px;top:241px;width:1565px;height:8px;background:linear-gradient(#c9c9c9,#d8d8d8 40%,#e6e6e6)"></div>
<!-- formula bar -->
<div class="a" style="left:2px;top:249px;width:1565px;height:58px;background:#e6e6e6;"></div>
<div class="a" style="left:9px;top:257px;width:152px;height:35px;background:#fdfdfd;border:1px solid #c6c6c6;"></div>
<div class="t" style="left:16.40px;top:266.00px;font-size:19.5px;letter-spacing:-0.226px;color:#262626;">A1</div>
<svg style="left:141px;top:270px" width="11" height="8" viewBox="141 270 11 8" ><path d="M142.8 272.2H150.2L146.5 275.9Z" fill="#666"/></svg>
<svg style="left:180px;top:265px" width="6" height="18" viewBox="180 265 6 18" ><g fill="#a6a6a6"><rect x="181.2" y="266" width="2.6" height="2.6"/><rect x="181.2" y="272.2" width="2.6" height="2.6"/><rect x="181.2" y="278.4" width="2.6" height="2.6"/></g></svg>
<div class="a" style="left:206px;top:257px;width:164px;height:35px;background:#fdfdfd;border:1px solid #c6c6c6;"></div>
<svg style="left:223px;top:265px" width="21" height="19" viewBox="223 265 21 19" ><path d="M225.6 267.4L241.6 281.8M241.6 267.4L225.6 281.8" stroke="#b9b9b9" stroke-width="1.9" fill="none"/></svg>
<svg style="left:277px;top:264px" width="23" height="20" viewBox="277 264 23 20" ><path d="M279.4 276.2L284.8 281.6L297.6 267.2" stroke="#c6c6c6" stroke-width="3" fill="none"/></svg>
<div class="t" style="left:332.60px;top:261.00px;font-size:24.5px;font-weight:bold;font-style:italic;font-family:'Liberation Serif',serif;color:#6c6c6c;">f</div>
<div class="t" style="left:341.40px;top:268.00px;font-size:16.5px;font-weight:bold;font-style:italic;font-family:'Liberation Serif',serif;color:#6c6c6c;">x</div>
<div class="a" style="left:374px;top:257px;width:1186px;height:35px;background:#fdfdfd;border:1px solid #c6c6c6;"></div>
<div class="t" style="left:391.20px;top:266.00px;font-size:19px;letter-spacing:0.599px;color:#262626;">Brown Beans</div>
<svg style="left:1539px;top:270px" width="15" height="11" viewBox="1539 270 15 11" ><path d="M1541.2 272.6L1546.4 277.8L1551.6 272.6" fill="none" stroke="#666" stroke-width="2.4"/></svg>
<!-- grid -->
<div class="a" style="left:2px;top:307px;width:1535px;height:644px;background:#fff;"></div>
<div class="a" style="left:2px;top:307px;width:1535px;height:103px;background:#e6e6e6;"></div>
<div class="a" style="left:2px;top:410px;width:145px;height:541px;background:#e6e6e6;"></div>
<div class="a" style="left:148px;top:307px;width:528px;height:102px;background:#d2d2d2;"></div>
<div class="a" style="left:2px;top:411px;width:144px;height:106px;background:#d2d2d2;"></div>
<svg style="left:46px;top:309px" width="101" height="100" viewBox="46 309 101 100" ><path d="M144 311.6V406.6H48.6Z" fill="#b2b2b2"/></svg>
<div class="a" style="left:147px;top:307px;width:1px;height:103px;background:#ababab;"></div>
<div class="a" style="left:676px;top:307px;width:1px;height:103px;background:#ababab;"></div>
<div class="a" style="left:1120px;top:307px;width:1px;height:103px;background:#ababab;"></div>
<div class="a" style="left:1475px;top:307px;width:1px;height:103px;background:#ababab;"></div>
<div class="a" style="left:2px;top:410px;width:1535px;height:1px;background:#9e9e9e;"></div>
<div class="a" style="left:147px;top:410px;width:1px;height:541px;background:#9b9b9b;"></div>
<div class="a" style="left:2px;top:517px;width:145px;height:1px;background:#9e9e9e;"></div>
<div class="a" style="left:148px;top:517px;width:1389px;height:1px;background:#d4d4d4;"></div>
<div class="a" style="left:2px;top:624px;width:145px;height:1px;background:#9e9e9e;"></div>
<div class="a" style="left:148px;top:624px;width:1389px;height:1px;background:#d4d4d4;"></div>
<div class="a" style="left:2px;top:731px;width:145px;height:1px;background:#9e9e9e;"></div>
<div class="a" style="left:148px;top:731px;width:1389px;height:1px;background:#d4d4d4;"></div>
<div class="a" style="left:2px;top:838px;width:145px;height:1px;background:#9e9e9e;"></div>
<div class="a" style="left:148px;top:838px;width:1389px;height:1px;background:#d4d4d4;"></div>
<div class="a" style="left:2px;top:945px;width:145px;height:1px;background:#9e9e9e;"></div>
<div class="a" style="left:148px;top:945px;width:1389px;height:1px;background:#d4d4d4;"></div>
<div class="a" style="left:676px;top:411px;width:1px;height:540px;background:#d4d4d4;"></div>
<div class="a" style="left:1120px;top:411px;width:1px;height:540px;background:#d4d4d4;"></div>
<div class="a" style="left:1475px;top:411px;width:1px;height:540px;background:#d4d4d4;"></div>
<div class="t" style="left:385.99px;top:322.00px;font-size:78px;color:#1d5f3b;transform:scaleX(.9);">A</div>
<div class="t" style="left:872.99px;top:322.00px;font-size:78px;color:#000;transform:scaleX(.82);">B</div>
<div class="t" style="left:1269.43px;top:322.00px;font-size:78px;color:#000;transform:scaleX(.81);">C</div>
<div class="t" style="left:56.20px;top:429.00px;font-size:75.5px;color:#1d5f3b;">1</div>
<div class="t" style="left:54.02px;top:538.00px;font-size:74px;color:#000;">2</div>
<div class="t" style="left:54.02px;top:645.00px;font-size:74px;color:#000;transform:scaleX(.92);">3</div>
<div class="t" style="left:54.02px;top:752.00px;font-size:74px;color:#000;">4</div>
<div class="t" style="left:54.02px;top:859.00px;font-size:74px;color:#000;transform:scaleX(.89);">5</div>
<div class="a" style="left:56px;top:484px;width:18.599999999999994px;height:11px;background:#d2d2d2;"></div>
<div class="a" style="left:82px;top:484px;width:16px;height:11px;background:#d2d2d2;"></div>
<div class="t" style="left:294.60px;top:446.00px;font-size:40.4px;letter-spacing:-0.500px;color:#000;">Brown Beans</div>
<div class="t" style="left:300.80px;top:553.00px;font-size:40.4px;letter-spacing:0.373px;color:#000;">White Onion</div>
<div class="t" style="left:275.00px;top:660.00px;font-size:40.4px;letter-spacing:-0.450px;color:#000;">Orange Flavour</div>
<div class="t" style="left:287.40px;top:767.00px;font-size:40.4px;letter-spacing:-0.416px;color:#000;">Green Pepper</div>
<div class="t" style="left:271.20px;top:874.00px;font-size:40.4px;letter-spacing:-0.080px;color:#000;">Red Tomantoes</div>
<div class="a" style="left:146px;top:409px;width:532px;height:110px;border:2px solid #0f6637"></div>
<div class="a" style="left:672px;top:513px;width:8px;height:8px;background:#fff;"></div>
<div class="a" style="left:678px;top:517px;width:2px;height:1px;background:#d4d4d4;"></div>
<div class="a" style="left:676px;top:519px;width:1px;height:2px;background:#d4d4d4;"></div>
<div class="a" style="left:673px;top:514px;width:6px;height:6px;background:#1a6b3e;"></div>
<div class="a" style="left:1536px;top:410px;width:1px;height:541px;background:#9b9b9b;"></div>
<div class="a" style="left:1537px;top:307px;width:30px;height:644px;background:#e6e6e6;"></div>
<div class="a" style="left:1537px;top:410px;width:2px;height:541px;background:#ededed;"></div>
<div class="a" style="left:1564px;top:307px;width:3px;height:644px;background:#ededed;"></div>
<div class="a" style="left:1539px;top:333px;width:25px;height:595px;background:#dadada;"></div>
<div class="a" style="left:1539px;top:308px;width:25px;height:25px;background:#fff;border:1px solid #747474;"></div>
<svg style="left:1545px;top:316px" width="14" height="10" viewBox="1545 316 14 10" ><path d="M1546 323H1557.4L1551.7 317Z" fill="#777"/></svg>
<div class="a" style="left:1539px;top:333px;width:25px;height:148px;background:#fff;border:1px solid #747474;"></div>
<!-- sheet tabs -->
<div class="a" style="left:2px;top:951px;width:1565px;height:35px;background:#e6e6e6;"></div>
<div class="a" style="left:2px;top:951px;width:1535px;height:1px;background:#9e9e9e;"></div>
<div class="a" style="left:2px;top:985px;width:1565px;height:1px;background:#d2d2d2;"></div>
<div class="a" style="left:1539px;top:928px;width:25px;height:25px;background:#fff;border:1px solid #747474;"></div>
<svg style="left:1545px;top:935px" width="14" height="10" viewBox="1545 935 14 10" ><path d="M1546 938.2H1557.2L1551.6 944Z" fill="#6e6e6e"/></svg>
<svg style="left:28px;top:960px" width="48" height="15" viewBox="28 960 48 15" ><path d="M37.6 961.8V972.6L31 967.2Z M65.6 961.8V972.6L72.2 967.2Z" fill="#c3c3c3"/></svg>
<div class="a" style="left:121px;top:951px;width:88px;height:31px;background:#fff;"></div>
<div class="a" style="left:120px;top:951px;width:1px;height:31px;background:#9e9e9e;"></div>
<div class="a" style="left:209px;top:951px;width:1px;height:31px;background:#9e9e9e;"></div>
<div class="a" style="left:120px;top:980px;width:90px;height:2px;background:#217346;"></div>
<div class="t" style="left:132.20px;top:956.00px;font-size:20px;letter-spacing:-0.332px;font-weight:bold;color:#217346;">Sheet1</div>
<svg style="left:247px;top:956px" width="24" height="24" viewBox="247 956 24 24" ><circle cx="259" cy="967.8" r="10.2" fill="none" stroke="#767676" stroke-width="1.3"/><path d="M253.6 967.8H264.4M259 962.4V973.2" stroke="#767676" stroke-width="1.5"/></svg>
<svg style="left:936px;top:960px" width="6" height="16" viewBox="936 960 6 16" ><g fill="#a6a6a6"><rect x="937.4" y="961.2" width="2.6" height="2.6"/><rect x="937.4" y="966.6" width="2.6" height="2.6"/><rect x="937.4" y="972" width="2.6" height="2.6"/></g></svg>
<div class="a" style="left:957px;top:955px;width:555px;height:25px;background:#dadada;"></div>
<div class="a" style="left:957px;top:955px;width:25px;height:25px;background:#fff;border:1px solid #747474;"></div>
<svg style="left:963px;top:961px" width="12" height="14" viewBox="963 961 12 14" ><path d="M972.4 962.2V973.2L966.6 967.7Z" fill="#6e6e6e"/></svg>
<div class="a" style="left:982px;top:955px;width:199px;height:25px;background:#fff;border:1px solid #747474;"></div>
<div class="a" style="left:1513px;top:955px;width:25px;height:25px;background:#fff;border:1px solid #747474;"></div>
<svg style="left:1519px;top:961px" width="12" height="14" viewBox="1519 961 12 14" ><path d="M1523.2 962.2V973.2L1529 967.7Z" fill="#6e6e6e"/></svg>
<!-- status bar -->
<div class="a" style="left:2px;top:986px;width:1565px;height:32px;background:#f3f2f1;"></div>
<div class="t" style="left:12.70px;top:995.00px;font-size:15px;letter-spacing:-0.292px;color:#444;">Ready</div>
<svg style="left:82px;top:992px" width="25" height="22" viewBox="82 992 25 22" ><path d="M91 1010.2H84.2V993.8H104V999" fill="none" stroke="#444" stroke-width="1.5"/><line x1="84.2" y1="996.8" x2="104" y2="996.8" stroke="#444" stroke-width="1.3"/><path d="M86.6 999.6H91.4M86.6 1002.6H89.6M86.6 1005.6H89.4" stroke="#444" stroke-width="1.3"/><circle cx="97.8" cy="1005.6" r="5.9" fill="#f3f2f1" stroke="#444" stroke-width="1.5"/><circle cx="97.8" cy="1005.6" r="2.6" fill="#444"/></svg>
<svg style="left:129px;top:991px" width="25" height="23" viewBox="129 991 25 23" ><circle cx="139.5" cy="994.8" r="2.7" fill="none" stroke="#444" stroke-width="1.4"/><path d="M135.8 999.4C133.4 998.8 130.6 998.6 130.8 996.6C131 994.8 133.6 994.6 135.2 996.6C136.8 998.6 142.2 998.6 143.8 996.6C145.4 994.6 148 994.8 148.2 996.6C148.4 998.6 145.6 998.8 143.4 999.6V1003.8M135.8 999.4C136.8 1003.2 135.4 1006.2 134 1009C133 1011.4 135.2 1012.8 137.2 1011" fill="none" stroke="#444" stroke-width="1.4" stroke-linecap="round" stroke-linejoin="round"/><path d="M140.2 1007.2L144.4 1011.8L152.4 1004" fill="none" stroke="#444" stroke-width="1.6"/></svg>
<div class="t" style="left:157.00px;top:995.00px;font-size:15px;letter-spacing:0.142px;color:#444;">Accessibility: Good to go</div>
<div class="a" style="left:1105px;top:986px;width:60px;height:32px;background:#cfcdcc;"></div>
<svg style="left:1123px;top:990px" width="23" height="22" viewBox="1123 990 23 22" ><rect x="1125.2" y="992.4" width="18" height="17.4" fill="#e4e2e0" stroke="#444" stroke-width="1.9"/><path d="M1131.2 992.4V1009.8M1137.2 992.4V1009.8M1125.2 998.2H1143.2M1125.2 1004H1143.2" stroke="#444" stroke-width="1.8"/></svg>
<svg style="left:1183px;top:990px" width="25" height="22" viewBox="1183 990 25 22" ><rect x="1185.4" y="992.4" width="19.6" height="17.6" fill="none" stroke="#444" stroke-width="1.5"/><rect x="1189.4" y="996" width="11.6" height="10.8" fill="none" stroke="#444" stroke-width="1.2"/><path d="M1191.8 999H1198.6M1191.8 1001.4H1198.6M1191.8 1003.8H1198.6" stroke="#444" stroke-width="1"/></svg>
<svg style="left:1242px;top:990px" width="26" height="22" viewBox="1242 990 26 22" ><path d="M1244.4 992.4H1264.8V1010H1244.4Z" fill="none" stroke="#444" stroke-width="1.5"/><path d="M1244.4 1002.8H1257.4V992.4M1251.4 992.4V1002.8" fill="none" stroke="#444" stroke-width="1.4"/></svg>
<div class="a" style="left:1293px;top:1001px;width:11px;height:1px;background:#5a5a5a;"></div>
<div class="a" style="left:1313px;top:1000.5px;width:148px;height:2.0px;background:#484848;"></div>
<div class="a" style="left:1386px;top:997.5px;width:2px;height:8.5px;background:#484848;"></div>
<div class="a" style="left:1447px;top:993px;width:8px;height:17px;background:#767676;"></div>
<div class="a" style="left:1469px;top:1001px;width:11px;height:1px;background:#5a5a5a;"></div>
<div class="a" style="left:1474px;top:996px;width:1px;height:11px;background:#5a5a5a;"></div>
<div class="t" style="left:1499.50px;top:995.00px;font-size:15px;letter-spacing:0.209px;color:#444;">370%</div>
<div class="a" style="left:0px;top:53px;width:2px;height:967px;background:#1e6b41;"></div>
<div class="a" style="left:1567px;top:53px;width:2px;height:967px;background:#1e6b41;"></div>
<div class="a" style="left:0px;top:1018px;width:1569px;height:2px;background:#1e6b41;"></div>
</div>
</body>
</html>
